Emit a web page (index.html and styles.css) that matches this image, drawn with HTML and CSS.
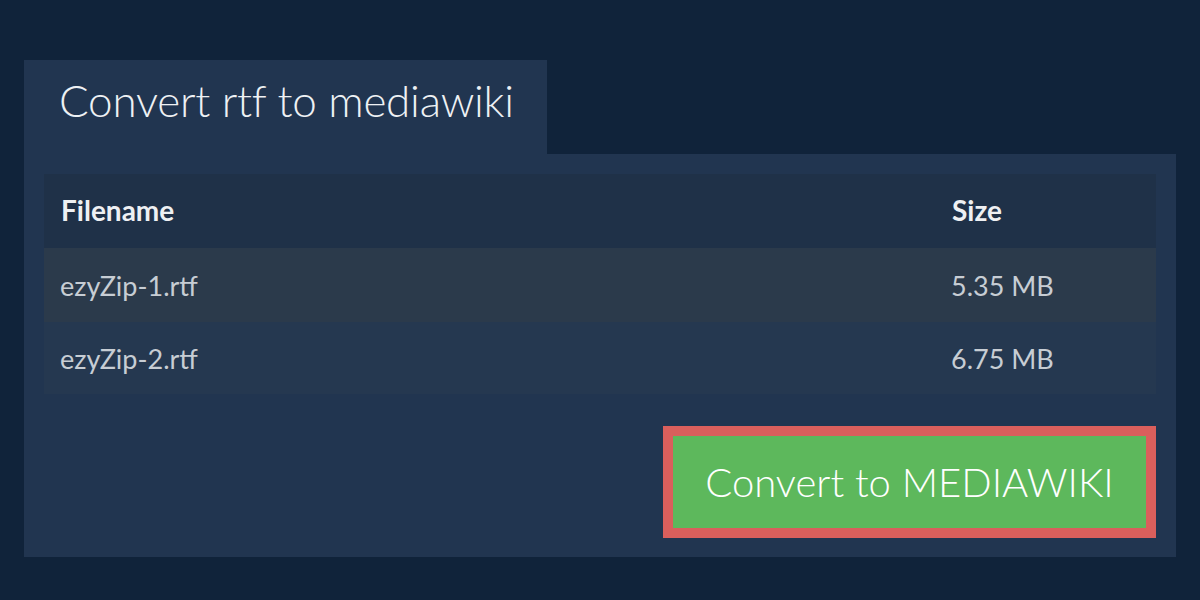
FILE: index.html
```html
<!DOCTYPE html>
<html>
<head>
<meta charset="utf-8">
<link rel="stylesheet" href="styles.css">
</head>
<body>
<div class="wrap">
  <div class="tab"><h1 class="title">Convert rtf to mediawiki</h1></div>
  <div class="panel">
    <div class="table">
      <div class="row head"><div class="cell">Filename</div><div class="cell">Size</div></div>
      <div class="row odd"><div class="cell">ezyZip-1.rtf</div><div class="cell">5.35 MB</div></div>
      <div class="row even"><div class="cell">ezyZip-2.rtf</div><div class="cell">6.75 MB</div></div>
    </div>
    <div class="actions">
      <button class="convert">Convert to MEDIAWIKI</button>
    </div>
  </div>
</div>
</body>
</html>
```
FILE: styles.css
```css
html, body {
  margin: 0;
  padding: 0;
  background: #10233a;
  font-family: Lato, "Open Sans", sans-serif;
}
.wrap {
  padding: 60px 24px 43px;
}
.tab {
  width: 523px;
  height: 94px;
  background: #213550;
  display: flex;
  align-items: center;
  padding-left: 35px;
  box-sizing: border-box;
}
.title {
  margin: 0;
  font-size: 44px;
  font-weight: 300;
  letter-spacing: -0.25px;
  color: #eef1f4;
  line-height: 1;
  padding-bottom: 14px;
}
.panel {
  background: #213550;
  padding: 20px 20px 19px;
}
.table {
  display: flex;
  flex-direction: column;
}
.row {
  display: grid;
  grid-template-columns: 891px 1fr;
  align-items: center;
  height: 74px;
}
.row.head {
  background: #1f3148;
}
.row.odd { background: #2b3a4b; }
.row.even { background: #253850; height: 72px; }
.cell {
  padding-left: 16px;
  padding-top: 3px;
  font-size: 27px;
  line-height: 1.2;
  color: #c7cdd4;
}
.head .cell {
  padding-top: 0;
  padding-left: 17px;
  font-size: 28px;
  font-weight: 700;
  color: #eef0f3;
}
.actions {
  display: flex;
  justify-content: flex-end;
  margin-top: 32px;
}
.convert {
  width: 493px;
  height: 112px;
  border: 10px solid #da5f5c;
  background: #5db85c;
  color: #ffffff;
  font-family: Lato, sans-serif;
  font-size: 40px;
  font-weight: 300;
  padding: 0;
}
```
